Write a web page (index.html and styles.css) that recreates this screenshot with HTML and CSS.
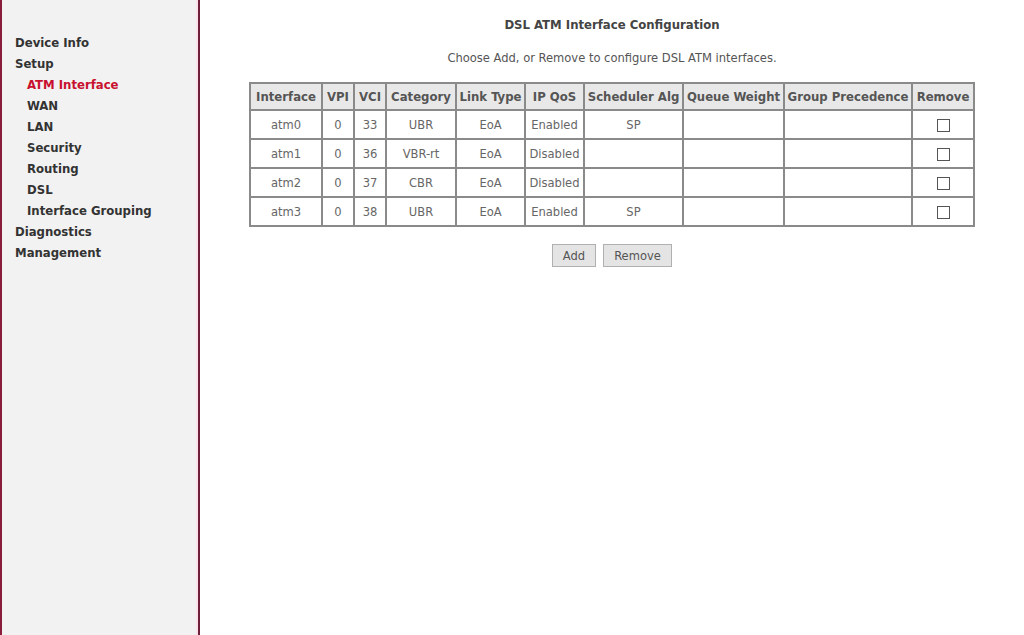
FILE: index.html
```html
<!DOCTYPE html>
<html>
<head>
<meta charset="utf-8">
<link rel="stylesheet" href="styles.css">
</head>
<body>
<div class="page">
  <nav class="sidebar">
    <ul class="menu">
      <li class="top">Device Info</li>
      <li class="top">Setup</li>
      <li class="sub active">ATM Interface</li>
      <li class="sub">WAN</li>
      <li class="sub">LAN</li>
      <li class="sub">Security</li>
      <li class="sub">Routing</li>
      <li class="sub">DSL</li>
      <li class="sub">Interface Grouping</li>
      <li class="top">Diagnostics</li>
      <li class="top">Management</li>
    </ul>
  </nav>
  <main class="content">
    <h1 class="title">DSL ATM Interface Configuration</h1>
    <p class="intro">Choose Add, or Remove to configure DSL ATM interfaces.</p>
    <table class="grid">
      <thead>
        <tr>
          <th class="c1">Interface</th><th class="c2">VPI</th><th class="c3">VCI</th><th class="c4">Category</th><th class="c5">Link Type</th><th class="c6">IP QoS</th><th class="c7">Scheduler Alg</th><th class="c8">Queue Weight</th><th class="c9">Group Precedence</th><th class="c10">Remove</th>
        </tr>
      </thead>
      <tbody>
        <tr><td>atm0</td><td>0</td><td>33</td><td>UBR</td><td>EoA</td><td>Enabled</td><td>SP</td><td></td><td></td><td><span class="box"></span></td></tr>
        <tr><td>atm1</td><td>0</td><td>36</td><td>VBR-rt</td><td>EoA</td><td>Disabled</td><td></td><td></td><td></td><td><span class="box"></span></td></tr>
        <tr><td>atm2</td><td>0</td><td>37</td><td>CBR</td><td>EoA</td><td>Disabled</td><td></td><td></td><td></td><td><span class="box"></span></td></tr>
        <tr><td>atm3</td><td>0</td><td>38</td><td>UBR</td><td>EoA</td><td>Enabled</td><td>SP</td><td></td><td></td><td><span class="box"></span></td></tr>
      </tbody>
    </table>
    <div class="actions">
      <button class="btn btn-add">Add</button>
      <button class="btn btn-remove">Remove</button>
    </div>
  </main>
</div>
</body>
</html>
```

FILE: styles.css
```css
html, body {
  margin: 0;
  padding: 0;
  height: 100%;
  background: #ffffff;
}
body {
  font-family: "DejaVu Sans Condensed", "DejaVu Sans", sans-serif;
  color: #555;
}
.page {
  display: flex;
  height: 635px;
}
.sidebar {
  width: 196px;
  flex: none;
  background: #f2f2f2;
  border-left: 2px solid #8a1c3c;
  border-right: 2px solid #6e1f3a;
  box-shadow: inset -2px 0 0 #fbe3ea;
}
.menu {
  list-style: none;
  margin: 0;
  padding: 32px 0 0 0;
}
.menu li {
  height: 21px;
  line-height: 21px;
  font-size: 13px;
  font-weight: bold;
  color: #333;
  white-space: nowrap;
}
.menu .top { padding-left: 13px; }
.menu .sub { padding-left: 25px; }
.menu .active { color: #c8102e; }

.content {
  flex: 1;
  display: flex;
  flex-direction: column;
  align-items: center;
}
.title {
  margin: 17px 0 0 0;
  font-size: 13px;
  line-height: 16px;
  font-weight: bold;
  color: #444;
}
.intro {
  margin: 17px 0 0 0;
  font-size: 12.8px;
  line-height: 16px;
  color: #555;
}
.grid {
  margin-top: 16px;
  border-collapse: separate;
  border-spacing: 0;
  border: 1px solid #8a8a8a;
  table-layout: fixed;
  width: 726px;
  font-size: 12.8px;
}
.grid th, .grid td {
  border: 1px solid #8a8a8a;
  text-align: center;
  padding: 0 1px;
  white-space: nowrap;
  overflow: hidden;
}
.grid th {
  height: 25px;
  background: #e8e8e8;
  font-weight: bold;
  font-size: 13px;
  color: #555;
}
.grid td {
  height: 27px;
  color: #666;
}
.c1 { width: 68px; }
.c2 { width: 28px; }
.c3 { width: 28px; }
.c4 { width: 66px; }
.c5 { width: 65px; }
.c6 { width: 55px; }
.c7 { width: 95px; }
.c8 { width: 97px; }
.c9 { width: 124px; }
.c10 { width: 58px; }
.box {
  display: inline-block;
  width: 11px;
  height: 11px;
  border: 1px solid #555;
  background: #fff;
  vertical-align: middle;
}
.actions {
  margin-top: 17px;
  display: flex;
  gap: 7px;
}
.btn {
  font-family: inherit;
  font-size: 12.8px;
  color: #555;
  background: #e4e4e4;
  border: 1px solid #b0b0b0;
  height: 23px;
  padding: 0 6px;
  margin: 0;
}
.btn-add { width: 44px; }
.btn-remove { width: 69px; }
```
